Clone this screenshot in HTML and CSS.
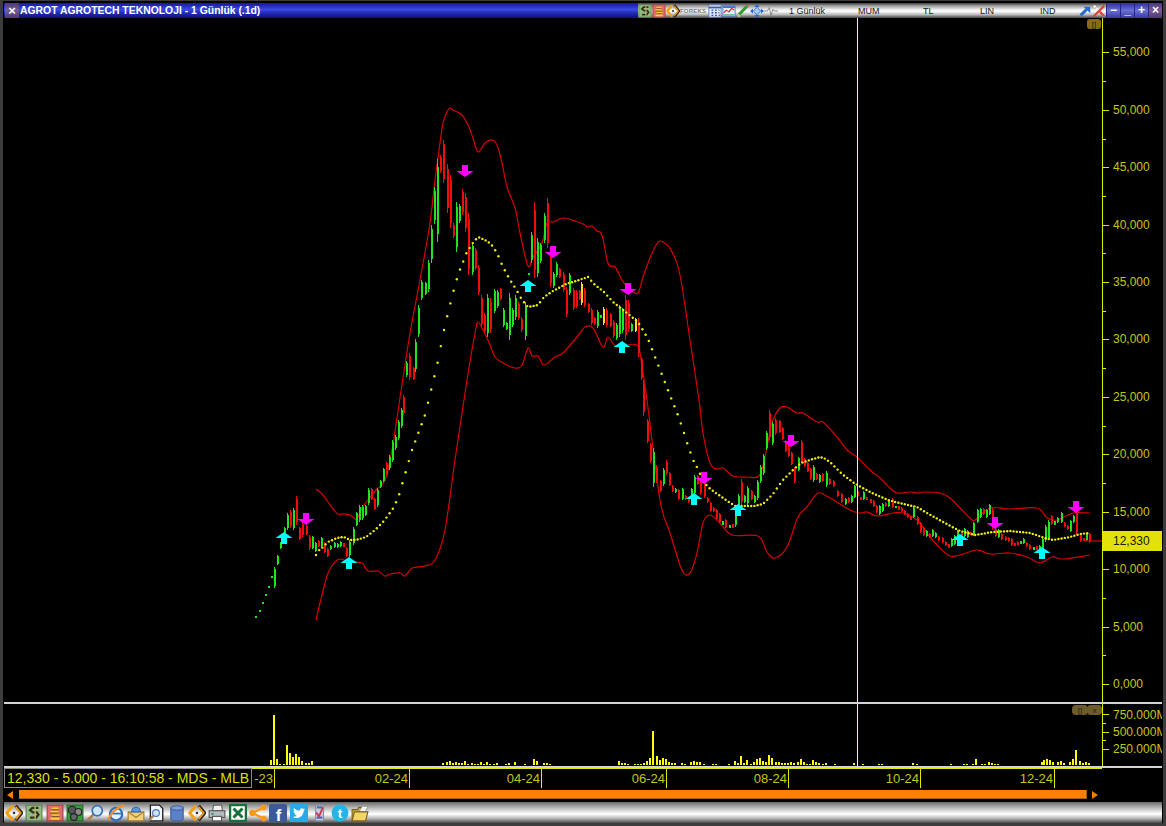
FILE: index.html
```html
<!DOCTYPE html>
<html lang="tr">
<head>
<meta charset="utf-8">
<title>AGROT AGROTECH TEKNOLOJI - 1 Günlük (.1d)</title>
<link rel="stylesheet" href="styles.css">
</head>
<body>
<svg class="defs" width="0" height="0" aria-hidden="true">
  <symbol id="i-money" viewBox="0 0 16 16"><rect x="1" y="1" width="14" height="14" fill="#8fbd80" stroke="#5d7f55"/><path d="M12 3.500H6.500L4.500 5.500 7 7.500h3.500L12 9.500 10 12H4.500" fill="none" stroke="#33301c" stroke-width="2"/><path d="M9 2v12" stroke="#c8b060" stroke-width="1.200"/></symbol>
  <symbol id="i-stack" viewBox="0 0 16 16"><rect x="1" y="1" width="14" height="14" fill="#e26a6a" stroke="#a04444"/><path d="M5 4h6M4 7h7M5 10h7M4 13h8" stroke="#f4d030" stroke-width="2"/><path d="M5 5h6M4 8h7M5 11h7" stroke="#5a3010" stroke-width=".7"/></symbol>
  <symbol id="i-diamond" viewBox="0 0 16 16"><path d="M7 1.500 1.500 8 7 14.500" fill="none" stroke="#f5a010" stroke-width="2.600"/><path d="M9.500 1.500 15 8l-5.500 6.500" fill="none" stroke="#2a2010" stroke-width="2.800"/><path d="M9.500 2.500 14 8l-4.500 5.500" fill="none" stroke="#f5a010" stroke-width="1.500"/><rect x="7" y="7" width="2" height="2" fill="#333"/></symbol>
  <symbol id="i-gears" viewBox="0 0 16 16"><rect x="1" y="1" width="14" height="14" fill="#35a03a" stroke="#1f6a25"/><circle cx="5.500" cy="5.500" r="3.500" fill="#555" stroke="#222"/><circle cx="11" cy="7" r="3" fill="#8a8a8a" stroke="#222"/><circle cx="7" cy="11.500" r="3" fill="#666" stroke="#222"/></symbol>
  <symbol id="i-search" viewBox="0 0 16 16"><path d="M7 9 1.500 14.500" stroke="#b08050" stroke-width="2.500"/><circle cx="10" cy="6" r="4.500" fill="#cfe4fa" stroke="#3a70b8" stroke-width="1.500"/></symbol>
  <symbol id="i-ie" viewBox="0 0 16 16"><circle cx="8" cy="9" r="5.500" fill="#e6f1fb" stroke="#2d6fc4" stroke-width="2"/><path d="M3 8.500h10" stroke="#2d6fc4" stroke-width="1.500"/><path d="M1 14C4 7 9 3 15 1" fill="none" stroke="#f09020" stroke-width="2"/></symbol>
  <symbol id="i-mail" viewBox="0 0 16 16"><rect x="1" y="7" width="14" height="8" fill="#f1d27a" stroke="#a07a30"/><path d="M1 7l7 5 7-5" fill="none" stroke="#a07a30"/><path d="M4 7a4 4 0 0 1 8 0z" fill="#5a9ae0" stroke="#3a6ab0"/></symbol>
  <symbol id="i-docsearch" viewBox="0 0 16 16"><path d="M3 1h8l3 3v11H3z" fill="#f2f6fb" stroke="#222" stroke-width="1.200"/><circle cx="8" cy="8" r="3" fill="#cfe4fa" stroke="#4a78b8"/><path d="M6 10 2 14.500" stroke="#b08050" stroke-width="2"/></symbol>
  <symbol id="i-db" viewBox="0 0 16 16"><path d="M2.500 3.500v9.500c0 2.500 11 2.500 11 0V3.500z" fill="#5b82c8" stroke="#41619c"/><ellipse cx="8" cy="3.500" rx="5.500" ry="2" fill="#7c9fdc" stroke="#41619c"/></symbol>
  <symbol id="i-printer" viewBox="0 0 16 16"><path d="M5 1h7l1 5H4z" fill="#f0f0f0" stroke="#666"/><rect x="1" y="6" width="14" height="6" fill="#b4bcc4" stroke="#555"/><rect x="4" y="11" width="8" height="4" fill="#fff" stroke="#555"/><rect x="3" y="8" width="2" height="1.500" fill="#2c8c3c"/></symbol>
  <symbol id="i-excel" viewBox="0 0 16 16"><rect x="1" y="1" width="14" height="14" fill="#fff" stroke="#17703a" stroke-width="2"/><path d="M4 4l8 8M12 4l-8 8" stroke="#17703a" stroke-width="2.600"/></symbol>
  <symbol id="i-share" viewBox="0 0 16 16"><path d="M13 3 3 8l10 5" fill="none" stroke="#f59a18" stroke-width="2"/><circle cx="13" cy="3" r="2.500" fill="#f59a18"/><circle cx="3" cy="8" r="2.800" fill="#f59a18"/><circle cx="13" cy="13" r="2.500" fill="#f59a18"/></symbol>
  <symbol id="i-tw" viewBox="0 0 16 16"><rect x="0" y="0" width="16" height="16" fill="#29a9e6"/><path d="M2.500 11.500c4 2.500 9.500 0 9.800-6l1.200-1.300-1.500.3c-1.300-1.500-3.600-.6-3.300 1.500C6.500 5.800 4.800 5 3.500 3.500c-.6 1.300-.3 2.400.6 3.200l-.9-.2c.1 1.200.8 2 2 2.400l-1 0c.4.900 1.100 1.300 2.100 1.400-1.200.9-2.400 1.200-3.800 1.200z" fill="#fff"/></symbol>
  <symbol id="i-figure" viewBox="0 0 16 16"><path d="M5 1h7v14H5z" fill="#c8ccd8" stroke="#8a8fa8"/><path d="M6 3h5M6 12h5" stroke="#5068b0" stroke-width="2"/><path d="M5.500 7.500 8 11l3.500-8" fill="none" stroke="#d03848" stroke-width="1.600"/></symbol>
  <symbol id="i-folder" viewBox="0 0 16 16"><path d="M1 5h5l1-2h3v12H1z" fill="#d8b040" stroke="#7a6020"/><path d="M7 7l3-5h5l-2 5z" fill="#f5f5f5" stroke="#8a8a8a" stroke-width=".7"/><path d="M1 15l2-8h12l-2 8z" fill="#f3d468" stroke="#7a6020"/></symbol>
  <symbol id="i-calc" viewBox="0 0 16 16"><rect x="1" y="1" width="14" height="14" fill="#dfe8f8" stroke="#5a78b8"/><path d="M1 4h14" stroke="#3a58b8" stroke-width="2"/><path d="M4 7h2M8 7h2M12 7h1M4 10h2M8 10h2M12 10h1M4 13h2M8 13h2" stroke="#2a4aa0" stroke-width="1.600"/><path d="M12 13h2" stroke="#d04030" stroke-width="1.600"/></symbol>
  <symbol id="i-chart" viewBox="0 0 16 16"><rect x="1" y="2" width="14" height="12" fill="#e8f0fa" stroke="#4a78c8"/><path d="M1 3.500h14" stroke="#3a68d0" stroke-width="2"/><path d="M2 10l3-3 3 2 3-4 3 2" fill="none" stroke="#d03030" stroke-width="1.300"/><path d="M2 12.500h12" stroke="#30a050" stroke-width="1.300"/></symbol>
  <symbol id="i-pencil" viewBox="0 0 16 16"><path d="M13 2 3.500 12" stroke="#2ea02e" stroke-width="3.500"/><path d="M2 15l.7-3.500 2.600 2.500z" fill="#e8d090"/><path d="M13 2l1.500 1.500" stroke="#e06060" stroke-width="2"/></symbol>
  <symbol id="i-arrows" viewBox="0 0 16 16"><path d="M8 0l3 3.500H5zM8 16l-3-3.500h6zM0 8l3.500-3v6zM16 8l-3.500 3V5z" fill="#2a6ad8"/><rect x="5" y="5" width="6" height="6" fill="#a8c8f4" stroke="#2a6ad8" transform="rotate(45 8 8)"/></symbol>
  <symbol id="i-pulse" viewBox="0 0 16 16"><path d="M0 8h4l2-4 2 9 2-7 1.500 2H16" fill="none" stroke="#7a7f8a"/></symbol>
  <symbol id="i-goto" viewBox="0 0 16 16"><path d="M3 13l7-7" stroke="#2a6ad0" stroke-width="3.500"/><path d="M6.500 3H14v7.500z" fill="#2a6ad0"/></symbol>
  <symbol id="i-tools" viewBox="0 0 16 16"><path d="M2 2l12 12" stroke="#f4f4f4" stroke-width="2.500"/><path d="M14 2 2 14" stroke="#e04030" stroke-width="2.500"/><path d="M9 9l5 5" stroke="#e04030" stroke-width="2.500"/><circle cx="3" cy="3" r="2" fill="#fff" stroke="#777" stroke-width=".6"/></symbol>
  <symbol id="up" viewBox="0 0 17 12"><path d="M8.500 0 17 6h-5.500v6h-6V6H0z"/></symbol>
  <symbol id="down" viewBox="0 0 17 12"><path d="M5.500 0h6v6H17l-8.500 6L0 6h5.500z"/></symbol>
</svg>

<div class="window">
  <header class="titlebar">
    <button class="close" type="button">×</button>
    <div class="caption">AGROT AGROTECH TEKNOLOJI - 1 Günlük (.1d)</div>
    <div class="tools">
      <svg class="ti"><use href="#i-money"/></svg>
      <svg class="ti"><use href="#i-stack"/></svg>
      <svg class="ti"><use href="#i-diamond"/></svg>
      <span class="foreks">FOREKS</span>
      <svg class="ti"><use href="#i-calc"/></svg>
      <svg class="ti"><use href="#i-chart"/></svg>
      <svg class="ti"><use href="#i-pencil"/></svg>
      <svg class="ti"><use href="#i-arrows"/></svg>
      <svg class="ti"><use href="#i-pulse"/></svg>
      <span class="lbl tf">1 Günlük</span>
      <span class="lbl mum">MUM</span>
      <span class="lbl tl">TL</span>
      <span class="lbl lin">LIN</span>
      <span class="lbl ind">IND</span>
      <svg class="ti"><use href="#i-goto"/></svg>
      <svg class="ti"><use href="#i-tools"/></svg>
    </div>
    <div class="winbtns">
      <span class="wb">−</span><span class="wb">_</span><span class="wb">+</span><span class="wb wb-x">×</span>
    </div>
  </header>

  <section class="pane-main">
    <svg class="plot" viewBox="4 18 1158 684" preserveAspectRatio="none">
      <line class="axis" x1="1102.500" y1="18" x2="1102.500" y2="702"/>
      <path class="axis" d="M1102 52h7M1102 81h4M1102 110h7M1102 139h4M1102 167h7M1102 196h4M1102 225h7M1102 253h4M1102 282h7M1102 311h4M1102 339h7M1102 368h4M1102 397h7M1102 426h4M1102 454h7M1102 483h4M1102 512h7M1102 598h4M1102 569h7M1102 627h7M1102 655h4M1102 684h7"/>
      <g class="ticks">
        <text x="1113" y="56">55,000</text><text x="1113" y="114">50,000</text><text x="1113" y="171">45,000</text>
        <text x="1113" y="229">40,000</text><text x="1113" y="286">35,000</text><text x="1113" y="343">30,000</text>
        <text x="1113" y="401">25,000</text><text x="1113" y="458">20,000</text><text x="1113" y="516">15,000</text>
        <text x="1113" y="573">10,000</text><text x="1113" y="631">5,000</text><text x="1113" y="688">0,000</text>
      </g>
      <path class="band" data-points="316,489 322,494 328,502 334,510 338,514 345,514 350,515 354,518 357,519 362,508 368,500 376,490 385,480 392,450 400,398 410,333 420,280 430,223 435,180 440,143 443,123 447,112 450,108 453,110 462,115 468,125 473,138 478,152 485,143 492,140 497,145 502,163 507,187 515,208 520,233 528,266 533,257 542,243 547,223 553,222 563,218 575,221 583,224 588,227 592,226 597,231 602,235 607,260 610,266 615,267 622,280 630,290 638,293 643,277 650,258 656,245 660,241 666,244 672,252 680,275 690,340 699,400 703,433 710,463 717,469 723,468 733,476 747,477 759,476 765,457 772,423 780,408 787,407 797,413 803,413 817,422 823,422 837,437 847,450 857,457 870,470 880,478 890,488 897,493 910,492 918,493 923,492 940,493 950,498 960,508 970,518 975,520 990,508 1010,509 1037,508 1047,518 1057,520 1073,513 1090,513"/>
      <path class="band" data-points="316,620 320,603 328,573 335,562 340,559 350,562 362,563 368,571 378,571 385,576 390,574 400,573 405,576 412,568 425,566 435,560 445,530 455,460 467,380 475,333 478,322 483,330 490,345 495,357 503,363 515,368 522,365 528,348 532,356 538,356 544,365 555,357 563,353 577,337 585,327 593,328 603,347 608,337 617,347 637,345 642,367 647,400 660,500 670,533 682,570 690,573 697,553 703,523 710,515 720,523 732,535 758,536 767,552 775,558 787,547 798,517 807,507 818,493 830,498 850,510 860,513 867,512 877,516 893,513 903,513 917,520 930,537 940,548 950,556 960,555 977,550 990,554 1010,553 1027,557 1040,563 1052,557 1063,559 1090,555"/>
      <g id="candles"></g>
      <g id="dots"></g>
      <line class="band" x1="1084" y1="541" x2="1102" y2="541"/>
      <g class="arrows-up">
        <use href="#up" x="275.500" y="532" width="17" height="12"/><use href="#up" x="340.500" y="557" width="17" height="12"/>
        <use href="#up" x="519.500" y="280" width="17" height="12"/><use href="#up" x="613.500" y="341" width="17" height="12"/>
        <use href="#up" x="685.500" y="493" width="17" height="12"/><use href="#up" x="729.500" y="504" width="17" height="12"/>
        <use href="#up" x="951.500" y="534" width="17" height="12"/><use href="#up" x="1033.500" y="547" width="17" height="12"/>
      </g>
      <g class="arrows-down">
        <use href="#down" x="297.500" y="513" width="17" height="12"/><use href="#down" x="456.500" y="165" width="17" height="12"/>
        <use href="#down" x="544.500" y="246" width="17" height="12"/><use href="#down" x="619.500" y="283" width="17" height="12"/>
        <use href="#down" x="695.500" y="472" width="17" height="12"/><use href="#down" x="782.500" y="435" width="17" height="12"/>
        <use href="#down" x="986.500" y="517" width="17" height="12"/><use href="#down" x="1067.500" y="501" width="17" height="12"/>
      </g>
      <line class="cross" x1="857.500" y1="18" x2="857.500" y2="702"/>
      <rect class="tag" x="1103" y="531" width="59" height="20"/>
      <text class="tag-text" x="1113" y="545">12,330</text>
      <rect class="pill" x="1087" y="19" width="14" height="10" rx="3"/>
      <text class="pill-text" x="1094" y="27">[]</text>
    </svg>
  </section>

  <div class="divider"></div>

  <section class="pane-volume">
    <svg class="plot" viewBox="4 704 1158 62" preserveAspectRatio="none">
      <line class="axis" x1="1102.500" y1="704" x2="1102.500" y2="766"/>
      <path class="axis" d="M1102 714h7M1102 723h4M1102 732h7M1102 740h4M1102 749h7"/>
      <g class="ticks">
        <text x="1113" y="719">750.000M</text><text x="1113" y="736">500.000M</text><text x="1113" y="753">250.000M</text>
      </g>
      <path id="volume" class="vol"/>
      <line class="cross" x1="857.500" y1="704" x2="857.500" y2="766"/>
      <rect class="pill pill-dim" x="1072" y="705" width="16" height="10" rx="4"/>
      <rect class="pill pill-dim" x="1087" y="705" width="15" height="10" rx="4"/>
      <text class="pill-text" x="1080" y="713">[]</text>
      <text class="pill-text" x="1094.500" y="713">x</text>
    </svg>
  </section>

  <div class="divider"></div>

  <section class="timebar">
    <div class="status">12,330 - 5.000 - 16:10:58 - MDS - MLB</div>
    <svg class="timeline" viewBox="252 768 910 20" preserveAspectRatio="none">
      <line class="axis" x1="252" y1="768.500" x2="1102" y2="768.500"/>
      <path class="axis" d="M274.500 768v20M409.500 768v20M541.500 768v20M666.500 768v20M788.500 768v20M920.500 768v20M1054.500 768v20"/>
      <g class="ticks-time">
        <text x="273" y="783">-23</text><text x="408" y="783">02-24</text><text x="540" y="783">04-24</text>
        <text x="665" y="783">06-24</text><text x="787" y="783">08-24</text><text x="919" y="783">10-24</text><text x="1053" y="783">12-24</text>
      </g>
    </svg>
  </section>

  <section class="scrollbar">
    <span class="arrow-left"></span>
    <div class="thumb"></div>
    <span class="arrow-right"></span>
  </section>

  <footer class="toolbar">
    <svg class="bi"><use href="#i-diamond"/></svg>
    <svg class="bi"><use href="#i-money"/></svg>
    <svg class="bi"><use href="#i-stack"/></svg>
    <svg class="bi"><use href="#i-gears"/></svg>
    <svg class="bi"><use href="#i-search"/></svg>
    <svg class="bi"><use href="#i-ie"/></svg>
    <svg class="bi"><use href="#i-mail"/></svg>
    <svg class="bi"><use href="#i-docsearch"/></svg>
    <svg class="bi"><use href="#i-db"/></svg>
    <svg class="bi"><use href="#i-diamond"/></svg>
    <svg class="bi"><use href="#i-printer"/></svg>
    <svg class="bi"><use href="#i-excel"/></svg>
    <svg class="bi"><use href="#i-share"/></svg>
    <svg class="bi" viewBox="0 0 16 16"><rect width="16" height="16" rx="1.500" fill="#3c5a99"/><text x="6" y="15" class="logo-f">f</text></svg>
    <svg class="bi"><use href="#i-tw"/></svg>
    <svg class="bi"><use href="#i-figure"/></svg>
    <svg class="bi" viewBox="0 0 16 16"><circle cx="8" cy="8" r="7.500" fill="#25b6e6"/><text x="8" y="12.500" class="logo-t">t</text></svg>
    <svg class="bi"><use href="#i-folder"/></svg>
  </footer>
</div>
<script src="chart.js"></script>
</body>
</html>
```
FILE: styles.css
```css
* { box-sizing: border-box; }
html, body { margin: 0; height: 100%; background: #000; }
.defs { position: absolute; }

.window {
  width: 1166px;
  height: 826px;
  display: flex;
  flex-direction: column;
  background: #000;
  border-style: solid;
  border-color: #3c3c3c;
  border-width: 1px 3px 3px 3px;
  padding: 2px 1px 0 1px;
  font-family: "Liberation Sans", Arial, sans-serif;
  overflow: hidden;
}

/* Title bar */
.titlebar { height: 15px; flex: none; display: flex; background: linear-gradient(#1616a0, #3c4ae4 45%, #2632c4 60%, #0e0e78); }
.close { width: 14px; margin-left: 1px; padding: 0; border: 0; color: #fff; font: bold 13px/13px "Liberation Sans", sans-serif; background: linear-gradient(#4a3a80, #7a5a98 50%, #50386c); }
.caption { width: 619px; padding-left: 1px; color: #fff; font-size: 10.400px; font-weight: bold; line-height: 15px; white-space: nowrap; }
.tools { width: 468px; display: flex; align-items: center; background: linear-gradient(#3c3c3c, #9a9a9a 18%, #e8e8e8 42%, #fff 55%, #b8b8b8 78%, #444); color: #222; }
.ti { width: 14px; height: 14px; flex: none; }
.foreks { width: 28px; flex: none; color: #7a7a7a; font-size: 6px; font-weight: bold; letter-spacing: .2px; white-space: nowrap; }
.lbl { flex: none; font-size: 9px; white-space: nowrap; }
.tf { width: 69px; margin-left: 11px; }
.mum { width: 65px; }
.tl { width: 57px; }
.lin { width: 60px; }
.ind { width: 38px; }
.winbtns { flex: 1; display: flex; }
.wb { flex: 1; color: #fff; text-align: center; font-size: 12px; font-weight: bold; line-height: 14px; background: linear-gradient(#2e2ea8, #6a70d0 50%, #3838a8); border-left: 1px solid #24248a; }
.wb-x { background: linear-gradient(#4a3a80, #7a5a98 50%, #50386c); }

/* Chart panes */
.pane-main { flex: 1; min-height: 0; }
.pane-volume { height: 62px; flex: none; }
.plot, .timeline { display: block; width: 100%; height: 100%; }
.divider { height: 2px; flex: none; background: #d2d2d2; }
.axis { stroke: #e6e600; stroke-width: 1; fill: none; shape-rendering: crispEdges; }
.ticks text { fill: #c6c612; font-size: 12px; }
.ticks-time text { fill: #c6c612; font-size: 13px; text-anchor: end; }
.band { fill: none; stroke: #d80000; stroke-width: 1.200; }
.cross { stroke: #ffff70; stroke-width: 1; shape-rendering: crispEdges; }
.tag { fill: #e2e20a; }
.tag-text { fill: #1a1a00; font-size: 12px; }
.pill { fill: #8a6c10; }
.pill-dim { fill: #6e5c2a; }
.pill-text { fill: #222; font-size: 8px; text-anchor: middle; }
.arrows-up { fill: #00ffff; }
.arrows-down { fill: #ff00ff; }
.wick, .body { fill: none; shape-rendering: crispEdges; }
.wick { stroke-width: 1; }
.body { stroke-width: 2; }
.c-g { stroke: #1ee61e; }
.c-r { stroke: #f20c0c; }
.c-y { stroke: #ffe020; }
.dot { fill: #f0f000; }
.vol { fill: none; stroke: #ffff00; stroke-width: 2; shape-rendering: crispEdges; }

/* Status and time axis */
.timebar { height: 20px; flex: none; display: flex; }
.status { width: 248px; flex: none; padding-left: 2px; border: 1px solid #8a8a8a; color: #dede00; background: #000; font-size: 14px; line-height: 18px; white-space: nowrap; overflow: hidden; }
.timeline { flex: 1; width: auto; min-width: 0; }

/* Scroll bar */
.scrollbar { height: 14px; flex: none; display: flex; align-items: center; padding: 0 0 1px 3px; }
.arrow-left { width: 0; height: 0; border-style: solid; border-width: 4px 6px 4px 0; border-color: transparent #f08000 transparent transparent; }
.thumb { width: 1068px; height: 9px; margin: 0 5px 0 6px; background: #ff8000; border-right: 1px solid #a06020; border-bottom: 1px solid #a06020; }
.arrow-right { width: 0; height: 0; border-style: solid; border-width: 4px 0 4px 6px; border-color: transparent transparent transparent #f08000; }

/* Bottom tool bar */
.toolbar { height: 21px; flex: none; display: flex; align-items: center; gap: 2.350px; padding-left: 1px; background: linear-gradient(#6a6a6a, #b0b0b0 25%, #f0f0f0 50%, #fff 58%, #b0b0b0 80%, #4a4a4a); }
.bi { width: 18px; height: 18px; flex: none; }
.logo-f { fill: #fff; font: bold 15px "Liberation Sans", sans-serif; }
.logo-t { fill: #fff; font: bold 12px "Liberation Sans", sans-serif; text-anchor: middle; }
```
FILE: chart.js
```js
// Daily candles: x, colour, high-y, low-y (already in chart pixels).
var CANDLES = "255g616-618 259g610-612 262g602-604 265g594-596 268g586-588 271g576-578 274g567-588 277g555-565 280g542-549 284g527-535 287g513-530 290r510-528 293g508-530 296r496-525 299r527-540 302r522-537 306r525-535 309r535-550 312g536-549 315g542-552 318r540-547 321g537-547 324r542-553 327r548-557 330g545-550 334g542-548 337g543-548 340g541-547 343r543-547 346r547-557 349g540-557 353g527-545 356g512-526 359g505-522 362g505-520 365g505-516 368g488-505 371r488-500 374r498-510 377g488-507 380g480-488 383g468-482 386r462-476 389g455-470 392g440-462 395g435-450 398g420-440 401g408-428 403r395-415 406g361-377 409r353-380 413r367-380 415g339-372 418g305-337 421g280-300 425g282-295 428g260-292 431g225-263 434g187-224 437g159-242 440r155-173 443r140-183 447r164-213 450r175-228 453r223-238 456g202-252 459g204-223 462r189-215 465r193-232 468r213-275 472g243-275 475r248-270 478r265-295 481r295-327 484r313-333 487g294-337 490r298-333 494g289-313 497g290-308 500r288-300 503g308-327 506g322-330 509g293-340 512g308-327 515g295-320 518r302-320 521r317-332 525g302-340 528g273-275 531g232-263 534r202-278 537g238-277 540g243-263 544g213-243 547r198-248 550r248-287 553g272-288 556g262-277 559r268-278 563r272-292 566r287-317 569g273-295 573r288-310 576r290-308 579r290-300 581y282-305 584r288-307 588r303-313 591r308-325 594r317-325 597g310-328 600g315-318 603y307-325 606r308-327 610r313-327 613r320-338 616g323-340 619g305-337 622g308-333 625r295-340 628r300-332 631g323-332 635y318-332 638r318-357 641r357-380 643r380-416 647r419-443 650r443-463 653g448-487 656r465-483 660r480-492 663g468-486 666r460-475 669r472-486 672r485-492 675g488-493 678r489-500 682g488-500 685r495-500 688r497-503 691g488-500 694g475-495 697r475-485 700r478-495 704r480-498 707r497-503 710r502-512 713r507-512 716r509-520 719r513-523 722g521-525 725r519-528 729g525-528 732r524-528 735g511-527 738g494-510 741r479-505 744g495-503 747g486-505 751r490-500 754g495-503 757g480-500 760g465-483 763g454-475 766g431-450 769r410-440 772g422-445 775r418-435 779r420-433 782r427-440 785r440-452 788r443-457 791r452-465 794r467-483 798g457-471 801r440-463 804r458-467 807r462-472 810r468-480 813g465-482 816r473-480 819g474-483 822r473-482 826g471-487 829r478-485 833r480-487 837r490-497 841r493-503 845g498-505 848r497-503 851g495-503 854g485-498 857r490-497 860r497-500 863g491-500 866r497-500 870r499-503 873r500-507 876r505-513 879g505-515 882g503-512 885r502-507 888g500-507 892r498-508 895g506-508 898r506-510 901r507-512 904r510-515 907r513-518 910r516-520 913g507-518 917r516-525 920r522-533 923r527-536 926g530-537 929r533-538 932g529-537 935g532-538 938r536-541 942r537-543 945r541-546 948r544-548 951g538-547 954g535-545 957g530-543 961r532-538 964g528-537 967g530-538 970r532-535 973g522-536 977g509-523 980g508-518 983r508-515 986g509-518 989g504-515 992r508-530 995r528-537 998g529-538 1001r533-540 1005r536-541 1008r537-542 1011r538-546 1014r543-546 1017r541-546 1020g541-544 1023g538-544 1026r542-547 1029r544-550 1033g547-550 1036r546-550 1039g545-550 1042g537-553 1045g525-542 1048g520-540 1051r515-525 1054g521-525 1057g517-523 1061g512-523 1064r522-527 1067r525-530 1070g520-532 1073g515-523 1076r510-535 1080r533-542 1083r538-541 1086g533-541 1089r533-543";

// Slow trend line, sampled once per candle as a dot.
var TREND = [[316,555],[318,551],[322,548],[328,542],[337,538],[344,537],[350,540],[356,540],[366,537],[375,530],[384,521],[394,507],[399,495],[412,450],[425,415],[434,378],[438,361],[441,345],[444,330],[447,317],[450,305],[453,293],[456,282],[459,272],[463,262],[466,254],[472,244],[478,237],[485,240],[491,244],[497,253],[503,267],[510,280],[516,289],[522,300],[528,307],[538,305],[544,297],[553,291],[566,284],[579,280],[588,277],[594,284],[604,292],[613,302],[622,309],[632,317],[638,322],[644,332],[648,339],[673,403],[676,410],[679,418],[682,427],[685,436],[688,446],[691,454],[694,462],[698,469],[701,476],[707,486],[713,491],[726,500],[735,506],[754,506],[763,504],[773,494],[782,481],[792,471],[801,463],[813,459],[820,457],[826,459],[832,464],[842,474],[854,483],[870,492],[888,500],[895,502],[917,507],[927,513],[945,523],[960,531],[975,535],[993,532],[1010,531],[1030,533],[1045,538],[1053,540],[1070,537],[1080,534],[1090,533]];

// Volume bars: x and height in pixels.
var VOLUME = [[270,5],[273,50],[276,6],[279,1],[283,1],[286,20],[289,12],[292,8],[295,11],[298,8],[301,4],[305,2],[308,2],[311,4],[442,2],[446,3],[449,4],[452,2],[455,3],[458,2],[461,2],[464,4],[467,1],[471,2],[474,1],[477,1],[480,3],[483,1],[486,3],[489,1],[493,1],[496,2],[505,1],[508,2],[514,3],[524,1],[533,6],[536,4],[543,2],[546,2],[549,1],[618,4],[621,2],[624,2],[627,1],[634,1],[637,1],[640,1],[643,2],[646,4],[649,7],[652,34],[656,9],[659,5],[662,7],[665,6],[668,3],[671,2],[674,2],[681,2],[684,1],[690,3],[693,4],[696,3],[699,3],[703,1],[712,1],[715,1],[728,1],[734,4],[737,2],[740,9],[743,2],[746,5],[750,1],[753,3],[756,6],[759,7],[762,4],[765,3],[768,10],[771,7],[775,3],[778,3],[781,2],[784,2],[787,2],[790,3],[793,2],[797,3],[800,6],[803,3],[806,1],[809,1],[812,5],[815,3],[818,2],[822,1],[825,2],[834,1],[853,2],[862,1],[878,1],[881,1],[912,2],[916,1],[950,1],[963,1],[966,1],[972,1],[975,6],[981,1],[984,1],[988,3],[991,2],[994,1],[997,1],[1041,3],[1043,5],[1046,6],[1049,5],[1052,3],[1057,3],[1060,4],[1063,2],[1069,3],[1072,6],[1075,15],[1079,4],[1082,2],[1085,3],[1088,2]];

var SVG_NS = "http://www.w3.org/2000/svg";

function el(name, cls) {
  var node = document.createElementNS(SVG_NS, name);
  node.setAttribute("class", cls);
  return node;
}

// Bollinger bands: a smooth curve through the sampled points.
function drawBands() {
  document.querySelectorAll("path[data-points]").forEach(function (path) {
    var p = path.getAttribute("data-points").split(" ").map(function (s) {
      return s.split(",").map(Number);
    });
    var d = "M" + p[0][0] + " " + p[0][1];
    for (var i = 0; i < p.length - 1; i++) {
      var a = p[Math.max(i - 1, 0)], b = p[i], c = p[i + 1], e = p[Math.min(i + 2, p.length - 1)];
      d += "C" + (b[0] + (c[0] - a[0]) / 6).toFixed(1) + " " + (b[1] + (c[1] - a[1]) / 6).toFixed(1) +
           " " + (c[0] - (e[0] - b[0]) / 6).toFixed(1) + " " + (c[1] - (e[1] - b[1]) / 6).toFixed(1) +
           " " + c[0] + " " + c[1];
    }
    path.setAttribute("d", d);
  });
}

function drawCandles() {
  var wicks = { g: "", r: "", y: "" };
  var bodies = { g: "", r: "", y: "" };
  CANDLES.split(" ").forEach(function (token) {
    var m = token.match(/^(\d+)([gry])(\d+)-(\d+)$/);
    var x = +m[1], top = +m[3], low = +m[4];
    var trim = Math.round((low - top) * 0.1);
    wicks[m[2]] += "M" + (x + 0.5) + " " + top + "V" + low;
    bodies[m[2]] += "M" + (x + 1) + " " + (top + trim) + "V" + (low - trim);
  });
  var root = document.getElementById("candles");
  ["g", "r", "y"].forEach(function (c) {
    var w = el("path", "wick c-" + c);
    w.setAttribute("d", wicks[c]);
    var b = el("path", "body c-" + c);
    b.setAttribute("d", bodies[c]);
    root.appendChild(w);
    root.appendChild(b);
  });
}

function drawDots() {
  var root = document.getElementById("dots");
  var seg = 0;
  for (var x = 316; x <= 1090; x += 3.2) {
    while (TREND[seg + 1][0] < x) seg++;
    var a = TREND[seg], b = TREND[seg + 1];
    var y = a[1] + (b[1] - a[1]) * (x - a[0]) / (b[0] - a[0]);
    var c = el("circle", "dot");
    c.setAttribute("cx", x.toFixed(1));
    c.setAttribute("cy", y.toFixed(1));
    c.setAttribute("r", "1.2");
    root.appendChild(c);
  }
}

function drawVolume() {
  var d = "";
  VOLUME.forEach(function (v) { d += "M" + (v[0] + 1) + " 765v" + (-v[1]); });
  document.getElementById("volume").setAttribute("d", d);
}

drawBands();
drawCandles();
drawDots();
drawVolume();
```
